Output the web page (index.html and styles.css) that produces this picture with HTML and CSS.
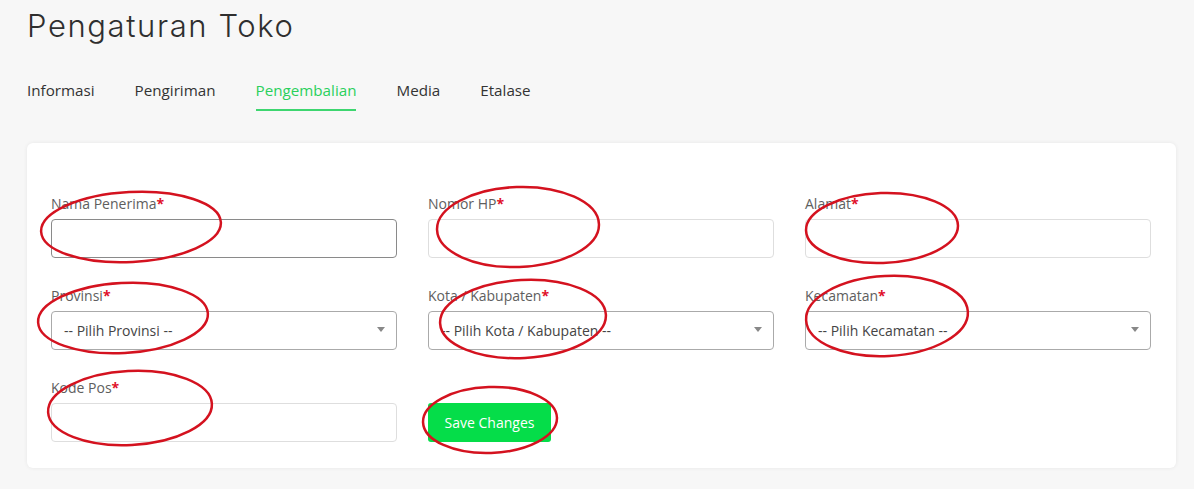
FILE: index.html
```html
<!DOCTYPE html>
<html lang="id">
<head>
<meta charset="utf-8">
<title>Pengaturan Toko</title>
<link rel="stylesheet" href="styles.css">
</head>
<body>
<div class="page">
  <h1 class="title">Pengaturan Toko</h1>
  <nav class="tabs">
    <a class="tab">Informasi</a>
    <a class="tab">Pengiriman</a>
    <a class="tab active">Pengembalian</a>
    <a class="tab">Media</a>
    <a class="tab">Etalase</a>
  </nav>
  <section class="card">
    <form class="form-grid">
      <div class="field">
        <label class="label">Nama Penerima<span class="req">*</span></label>
        <input class="input focused" type="text">
      </div>
      <div class="field">
        <label class="label">Nomor HP<span class="req">*</span></label>
        <input class="input" type="text">
      </div>
      <div class="field">
        <label class="label">Alamat<span class="req">*</span></label>
        <input class="input" type="text">
      </div>
      <div class="field">
        <label class="label">Provinsi<span class="req">*</span></label>
        <div class="select"><span>-- Pilih Provinsi --</span><i class="arrow"></i></div>
      </div>
      <div class="field">
        <label class="label">Kota / Kabupaten<span class="req">*</span></label>
        <div class="select"><span>-- Pilih Kota / Kabupaten --</span><i class="arrow"></i></div>
      </div>
      <div class="field">
        <label class="label">Kecamatan<span class="req">*</span></label>
        <div class="select"><span>-- Pilih Kecamatan --</span><i class="arrow"></i></div>
      </div>
      <div class="field">
        <label class="label">Kode Pos<span class="req">*</span></label>
        <input class="input" type="text">
      </div>
      <div class="field field-end">
        <button class="btn" type="button">Save Changes</button>
      </div>
    </form>
  </section>
</div>
<svg class="marks" width="1194" height="489" viewBox="0 0 1194 489" aria-hidden="true">
  <g fill="none" stroke="#d4121f" stroke-width="2.5">
    <ellipse cx="131" cy="227" rx="90" ry="35" transform="rotate(-3 131 227)"/>
    <ellipse cx="123" cy="318" rx="85" ry="35" transform="rotate(-3 123 318)"/>
    <ellipse cx="518" cy="227" rx="81" ry="40" transform="rotate(-2 518 227)"/>
    <ellipse cx="523" cy="319" rx="83" ry="39" transform="rotate(-3 523 319)"/>
    <ellipse cx="882" cy="228" rx="76" ry="35" transform="rotate(-2 882 228)"/>
    <ellipse cx="887" cy="316" rx="81" ry="40" transform="rotate(-3 887 316)"/>
    <ellipse cx="130" cy="408" rx="82" ry="37" transform="rotate(-3 130 408)"/>
    <ellipse cx="490" cy="420" rx="67" ry="33" transform="rotate(-2 490 420)"/>
  </g>
</svg>
</body>
</html>
```

FILE: styles.css
```css
html, body {
  margin: 0;
  padding: 0;
  background: #f7f7f7;
}
body {
  position: relative;
  font-family: "Open Sans", "Liberation Sans", sans-serif;
  color: #333;
  width: 1194px;
  height: 489px;
  overflow: hidden;
}
.page {
  padding: 6px 18px 0 27px;
}
.title {
  margin: 0;
  font-family: Inter, "Open Sans", sans-serif;
  font-weight: 300;
  font-size: 31px;
  line-height: 40px;
  color: #2f2f2f;
  letter-spacing: 1.6px;
}
.tabs {
  display: flex;
  gap: 40px;
  margin-top: 34px;
}
.tab {
  font-size: 15.2px;
  line-height: 20px;
  color: #333;
  padding-bottom: 9px;
  border-bottom: 2px solid transparent;
}
.tab.active {
  color: #2ad05c;
  border-bottom-color: #3ed670;
}
.card {
  margin-top: 32px;
  background: #fff;
  border-radius: 6px;
  box-shadow: 0 0 4px rgba(0,0,0,0.07);
  padding: 50px 25px 26px 24px;
}
.form-grid {
  display: grid;
  grid-template-columns: repeat(3, 346px);
  column-gap: 31px;
  row-gap: 27px;
}
.field {
  display: flex;
  flex-direction: column;
}
.field-end {
  justify-content: flex-end;
}
.label {
  font-size: 14px;
  line-height: 21px;
  color: #5e5e5e;
  margin-bottom: 5px;
}
.req {
  color: #e0102a;
  font-weight: 700;
}
.input {
  box-sizing: border-box;
  height: 39px;
  border: 1px solid #dedede;
  border-radius: 4px;
  background: #fff;
  margin: 0;
  font: inherit;
  outline: none;
}
.input.focused {
  border-color: #8a8a8a;
}
.select {
  box-sizing: border-box;
  height: 39px;
  border: 1px solid #aaa;
  border-radius: 4px;
  display: flex;
  align-items: center;
  justify-content: space-between;
  padding: 0 11px 0 12px;
  font-size: 14px;
  color: #444;
}
.arrow {
  width: 0;
  height: 0;
  border-left: 4px solid transparent;
  border-right: 4px solid transparent;
  border-top: 5px solid #888;
  margin-top: -3px;
}
.btn {
  width: 123px;
  height: 39px;
  border: 0;
  border-radius: 3px;
  background: #05dd49;
  color: #fff;
  font-family: "Open Sans", "Liberation Sans", sans-serif;
  font-size: 14px;
  padding: 0;
}
.marks {
  position: absolute;
  top: 0;
  left: 0;
  pointer-events: none;
}
```
